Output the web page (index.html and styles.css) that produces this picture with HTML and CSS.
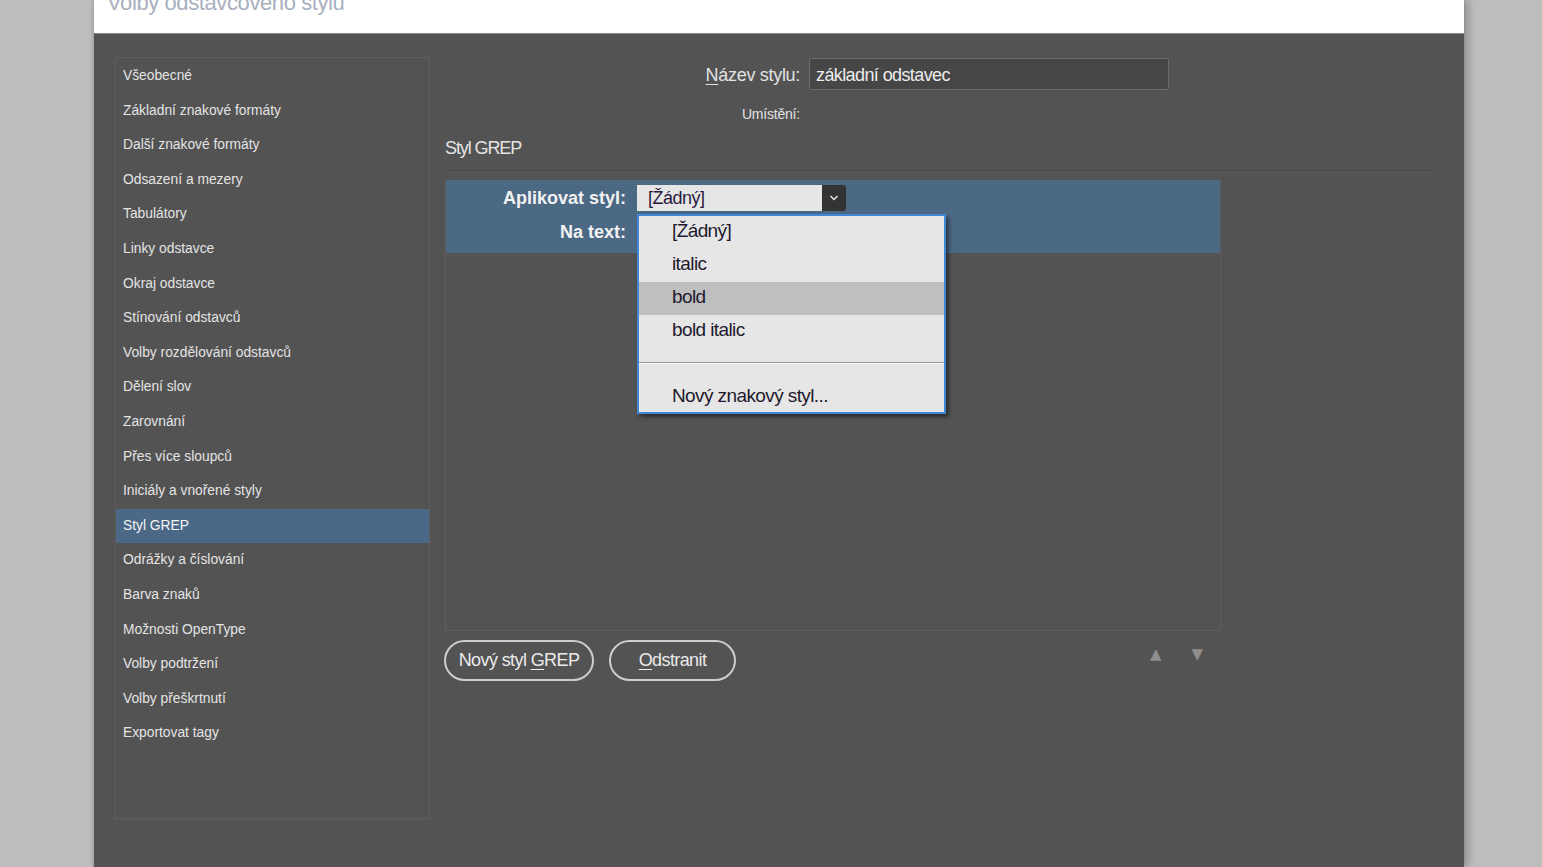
FILE: index.html
```html
<!DOCTYPE html>
<html lang="cs">
<head>
<meta charset="utf-8">
<title>Volby odstavcového stylu</title>
<link rel="stylesheet" href="styles.css">
</head>
<body>
<div class="dialog">
  <div class="titlebar"><span class="title">Volby odstavcového stylu</span></div>
  <div class="content">
    <ul class="nav">
      <li>Všeobecné</li>
      <li>Základní znakové formáty</li>
      <li>Další znakové formáty</li>
      <li>Odsazení a mezery</li>
      <li>Tabulátory</li>
      <li>Linky odstavce</li>
      <li>Okraj odstavce</li>
      <li>Stínování odstavců</li>
      <li>Volby rozdělování odstavců</li>
      <li>Dělení slov</li>
      <li>Zarovnání</li>
      <li>Přes více sloupců</li>
      <li>Iniciály a vnořené styly</li>
      <li class="active">Styl GREP</li>
      <li>Odrážky a číslování</li>
      <li>Barva znaků</li>
      <li>Možnosti OpenType</li>
      <li>Volby podtržení</li>
      <li>Volby přeškrtnutí</li>
      <li>Exportovat tagy</li>
    </ul>
    <div class="main">
      <div class="name-row">
        <label class="name-label"><u>N</u>ázev stylu:</label>
        <div class="name-input">základní odstavec</div>
      </div>
      <div class="place-row">Umístění:</div>
      <div class="section-title">Styl GREP</div>
      <div class="separator"></div>
      <div class="grep-box">
        <div class="grep-head">
          <div class="grep-row">
            <span class="grep-label">Aplikovat styl:</span>
            <div class="select">
              <span class="select-value">[Žádný]</span>
              <span class="select-btn">
                <svg width="10" height="6" viewBox="0 0 10 6"><path d="M1.5 1 L5 4.5 L8.5 1" fill="none" stroke="#e8e8e8" stroke-width="1.5"/></svg>
              </span>
            </div>
          </div>
          <div class="grep-row second">
            <span class="grep-label">Na text:</span>
          </div>
          <ul class="menu">
            <li>[Žádný]</li>
            <li>italic</li>
            <li class="hover">bold</li>
            <li>bold italic</li>
            <li class="menu-sep"></li>
            <li>Nový znakový styl...</li>
          </ul>
        </div>
      </div>
      <div class="actions">
        <button class="pill pill-new">Nový styl <u>G</u>REP</button>
        <button class="pill pill-del"><u>O</u>dstranit</button>
        <div class="arrows">
          <span class="arrow">▲</span>
          <span class="arrow">▼</span>
        </div>
      </div>
    </div>
  </div>
</div>
</body>
</html>
```

FILE: styles.css
```css
* { box-sizing: border-box; }
html, body { margin: 0; padding: 0; }
body {
  background: #bdbdbd;
  height: 867px;
  overflow: hidden;
  font-family: "Liberation Sans", Arial, sans-serif;
}
.dialog {
  margin-left: 94px;
  width: 1370px;
  height: 867px;
  background: #535353;
  box-shadow: 4px 0 8px rgba(0,0,0,0.25), -1px 0 3px rgba(0,0,0,0.15);
}
.titlebar {
  height: 34px;
  background: #ffffff;
  border-bottom: 1px solid #8c8c8c;
  overflow: hidden;
  padding-left: 13px;
}
.title {
  display: block;
  margin-top: -10px;
  font-size: 22px;
  line-height: 26px;
  color: #a8afbe;
  letter-spacing: -0.4px;
}
.content {
  display: flex;
  padding: 23px 0 0 21px;
  gap: 15px;
}
.nav {
  list-style: none;
  margin: 0;
  padding: 1px 0 0;
  width: 315px;
  height: 763px;
  border: 1px solid #5e5e5e;
  border-bottom: 2px solid #5a5a5a;
}
.nav li {
  height: 34.6px;
  line-height: 34.6px;
  padding-left: 7px;
  font-size: 13.8px;
  color: #e4e4e4;
  letter-spacing: 0;
  white-space: nowrap;
}
.nav li.active {
  background: #4b6887;
  color: #f4f4f4;
}
.main {
  width: 987px;
  display: flex;
  flex-direction: column;
}
.name-row {
  display: flex;
  align-items: center;
  gap: 9px;
  margin-top: 1px;
}
.name-label {
  width: 355px;
  text-align: right;
  font-size: 18px;
  color: #e2e2e2;
  letter-spacing: -0.3px;
  padding-top: 3px;
}
.name-label u { text-underline-offset: 3px; }
.name-input {
  width: 360px;
  height: 32px;
  background: #464646;
  border: 1px solid #6b6b6b;
  border-radius: 2px;
  padding: 1px 0 0 6px;
  font-size: 18px;
  line-height: 30px;
  color: #ececec;
  letter-spacing: -0.6px;
}
.place-row {
  width: 355px;
  text-align: right;
  margin-top: 16px;
  font-size: 14px;
  line-height: 16px;
  color: #e2e2e2;
  letter-spacing: -0.2px;
}
.section-title {
  margin-top: 15px;
  font-size: 18px;
  line-height: 22px;
  color: #e4e4e4;
  letter-spacing: -1.1px;
}
.separator {
  margin-top: 11px;
  height: 2px;
  border-top: 1px solid #474747;
  border-bottom: 1px solid #5a5a5a;
}
.grep-box {
  margin-top: 8px;
  width: 776px;
  height: 451px;
  border: 1px solid #5e5e5e;
  border-top: none;
}
.grep-head {
  position: relative;
  height: 73px;
  background: #4c6984;
  padding-top: 5px;
}
.grep-row {
  display: flex;
  align-items: center;
  height: 26px;
  gap: 11px;
}
.grep-row.second { margin-top: 8px; }
.grep-label {
  width: 180px;
  text-align: right;
  font-size: 18px;
  font-weight: bold;
  color: #f2f2f2;
  letter-spacing: 0;
}
.select {
  display: flex;
  height: 26px;
}
.select-value {
  width: 185px;
  background: #e6e6e6;
  padding-left: 11px;
  font-size: 18px;
  line-height: 26px;
  color: #2a1a3e;
  letter-spacing: -0.5px;
}
.select-btn {
  width: 24px;
  height: 26px;
  background: #333333;
  border-radius: 0 3px 3px 0;
  display: flex;
  align-items: center;
  justify-content: center;
}
.menu {
  position: absolute;
  left: 191px;
  top: 34px;
  width: 309px;
  height: 200px;
  margin: 0;
  padding: 0;
  list-style: none;
  background: #e6e6e6;
  border: 2px solid #3f88d4;
  box-shadow: 3px 3px 4px rgba(0,0,0,0.45);
  z-index: 5;
}
.menu li {
  height: 33px;
  line-height: 30px;
  padding-left: 33px;
  font-size: 19px;
  color: #1e1a2e;
  letter-spacing: -0.6px;
}
.menu li.hover { background: #bfbfbf; }
.menu li.menu-sep {
  height: 33px;
  position: relative;
}
.menu li.menu-sep::after {
  content: "";
  position: absolute;
  left: 0;
  right: 0;
  top: 14px;
  border-top: 1px solid #9a9a9a;
  border-bottom: 1px solid #f6f6f6;
}
.actions {
  display: flex;
  align-items: center;
  margin-top: 8px;
  width: 776px;
  height: 42px;
  gap: 15px;
}
.pill {
  height: 41px;
  border: 2px solid #cdcdcd;
  border-radius: 21px;
  background: transparent;
  color: #eaeaea;
  font-family: "Liberation Sans", Arial, sans-serif;
  font-size: 18px;
  letter-spacing: -0.6px;
  padding: 0;
  margin-left: -1px;
}
.pill u { text-underline-offset: 3px; }
.pill-new { width: 150px; }
.pill-del { width: 127px; margin-left: 0; }
.arrows {
  margin-left: auto;
  margin-right: 18px;
  display: flex;
  gap: 30px;
  margin-top: -12px;
}
.arrow {
  font-size: 15px;
  color: #8e8e8e;
  font-family: "DejaVu Sans", sans-serif;
}
```
